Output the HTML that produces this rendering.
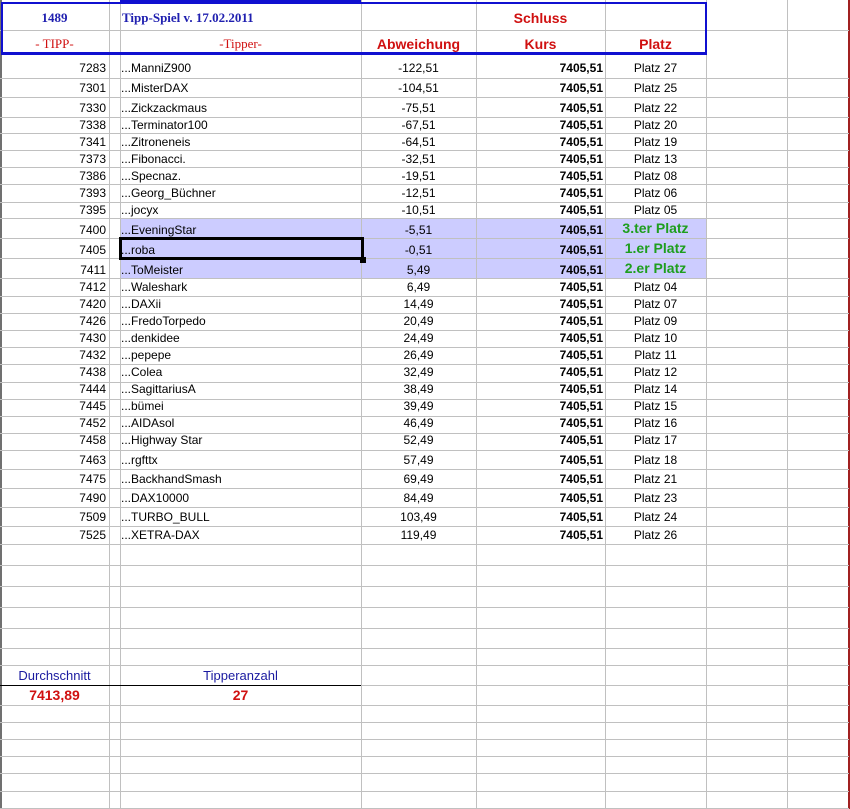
<!DOCTYPE html>
<html><head><meta charset="utf-8"><style>
*{margin:0;padding:0;box-sizing:border-box}
body{width:850px;height:809px;background:#fff;position:relative;overflow:hidden;font-family:"Liberation Sans",Arial,sans-serif;font-size:12px;color:#000}
.h{position:absolute;left:0;width:849px;height:1px;background:#c0c0c0}
.v{position:absolute;top:0;height:809px;width:1px;background:#c0c0c0}
.t{position:absolute;height:14px;line-height:14px;white-space:nowrap}
.n{left:0;width:106px;text-align:right}
.m{left:121px}
.a{left:361px;width:115px;text-align:center}
.k{left:476px;width:127px;text-align:right;font-weight:bold}
.p{left:605px;width:101px;text-align:center}
.g{color:#1e9e1e;font-weight:bold;font-size:14px}
</style></head><body>
<div style="position:absolute;left:120px;top:218px;width:586px;height:60px;background:#ccccff"></div>

<div class="v" style="left:109px"></div><div class="v" style="left:120px"></div>
<div class="v" style="left:361px"></div><div class="v" style="left:476px"></div>
<div class="v" style="left:605px"></div><div class="v" style="left:706px"></div>
<div class="v" style="left:787px"></div>
<div class="v" style="left:0;width:2px;background:#707070"></div>
<div class="v" style="left:848px;width:2px;background:#a02020"></div>

<div class="h" style="top:30px"></div>
<div class="h" style="top:78px"></div><div class="h" style="top:97px"></div><div class="h" style="top:117px"></div>
<div class="h" style="top:133px"></div><div class="h" style="top:150px"></div><div class="h" style="top:167px"></div>
<div class="h" style="top:184px"></div><div class="h" style="top:202px"></div><div class="h" style="top:218px"></div>
<div class="h" style="top:238px"></div><div class="h" style="top:258px"></div><div class="h" style="top:278px"></div>
<div class="h" style="top:296px"></div><div class="h" style="top:313px"></div><div class="h" style="top:330px"></div>
<div class="h" style="top:347px"></div><div class="h" style="top:364px"></div><div class="h" style="top:382px"></div>
<div class="h" style="top:399px"></div><div class="h" style="top:416px"></div><div class="h" style="top:433px"></div>
<div class="h" style="top:450px"></div><div class="h" style="top:469px"></div><div class="h" style="top:488px"></div>
<div class="h" style="top:507px"></div><div class="h" style="top:526px"></div><div class="h" style="top:544px"></div>
<div class="h" style="top:565px"></div><div class="h" style="top:586px"></div><div class="h" style="top:607px"></div>
<div class="h" style="top:628px"></div><div class="h" style="top:648px"></div><div class="h" style="top:665px"></div>
<div class="h" style="top:705px"></div><div class="h" style="top:722px"></div><div class="h" style="top:739px"></div>
<div class="h" style="top:756px"></div><div class="h" style="top:773px"></div><div class="h" style="top:791px"></div>
<div class="h" style="top:808px"></div>
<div class="h" style="top:685px;width:361px;background:#000"></div>
<div class="h" style="top:685px;left:361px;width:488px"></div>

<!-- header box -->
<div style="position:absolute;left:1px;top:2px;width:706px;height:53px;border:2px solid #1010d0;border-bottom-width:3px"></div>
<div style="position:absolute;left:120px;top:0;width:241px;height:3px;background:#1010d0"></div>
<div class="t" style="left:0;width:109px;top:11px;text-align:center;font-family:'Liberation Serif',serif;font-weight:bold;font-size:13px;color:#2020b0">1489</div>
<div class="t" style="left:122px;top:11px;font-family:'Liberation Serif',serif;font-weight:bold;font-size:13px;color:#2020b0">Tipp-Spiel v. 17.02.2011</div>
<div class="t" style="left:0;width:109px;top:37px;text-align:center;font-family:'Liberation Serif',serif;font-size:13px;color:#d01010">- TIPP-</div>
<div class="t" style="left:120px;width:241px;top:37px;text-align:center;font-family:'Liberation Serif',serif;font-size:13px;color:#d01010">-Tipper-</div>
<div class="t" style="left:361px;width:115px;top:37px;text-align:center;font-weight:bold;font-size:14px;color:#d01010">Abweichung</div>
<div class="t" style="left:476px;width:129px;top:11px;text-align:center;font-weight:bold;font-size:14px;color:#d01010">Schluss</div>
<div class="t" style="left:476px;width:129px;top:37px;text-align:center;font-weight:bold;font-size:14px;color:#d01010">Kurs</div>
<div class="t" style="left:605px;width:101px;top:37px;text-align:center;font-weight:bold;font-size:14px;color:#d01010">Platz</div>

<div class="t n" style="top:61px">7283</div><div class="t m" style="top:61px">...ManniZ900</div><div class="t a" style="top:61px">-122,51</div><div class="t k" style="top:61px">7405,51</div><div class="t p" style="top:61px">Platz 27</div>
<div class="t n" style="top:81px">7301</div><div class="t m" style="top:81px">...MisterDAX</div><div class="t a" style="top:81px">-104,51</div><div class="t k" style="top:81px">7405,51</div><div class="t p" style="top:81px">Platz 25</div>
<div class="t n" style="top:101px">7330</div><div class="t m" style="top:101px">...Zickzackmaus</div><div class="t a" style="top:101px">-75,51</div><div class="t k" style="top:101px">7405,51</div><div class="t p" style="top:101px">Platz 22</div>
<div class="t n" style="top:118px">7338</div><div class="t m" style="top:118px">...Terminator100</div><div class="t a" style="top:118px">-67,51</div><div class="t k" style="top:118px">7405,51</div><div class="t p" style="top:118px">Platz 20</div>
<div class="t n" style="top:135px">7341</div><div class="t m" style="top:135px">...Zitroneneis</div><div class="t a" style="top:135px">-64,51</div><div class="t k" style="top:135px">7405,51</div><div class="t p" style="top:135px">Platz 19</div>
<div class="t n" style="top:152px">7373</div><div class="t m" style="top:152px">...Fibonacci.</div><div class="t a" style="top:152px">-32,51</div><div class="t k" style="top:152px">7405,51</div><div class="t p" style="top:152px">Platz 13</div>
<div class="t n" style="top:169px">7386</div><div class="t m" style="top:169px">...Specnaz.</div><div class="t a" style="top:169px">-19,51</div><div class="t k" style="top:169px">7405,51</div><div class="t p" style="top:169px">Platz 08</div>
<div class="t n" style="top:186px">7393</div><div class="t m" style="top:186px">...Georg_Büchner</div><div class="t a" style="top:186px">-12,51</div><div class="t k" style="top:186px">7405,51</div><div class="t p" style="top:186px">Platz 06</div>
<div class="t n" style="top:203px">7395</div><div class="t m" style="top:203px">...jocyx</div><div class="t a" style="top:203px">-10,51</div><div class="t k" style="top:203px">7405,51</div><div class="t p" style="top:203px">Platz 05</div>
<div class="t n" style="top:223px">7400</div><div class="t m" style="top:223px">...EveningStar</div><div class="t a" style="top:223px">-5,51</div><div class="t k" style="top:223px">7405,51</div><div class="t p g" style="top:221px">3.ter Platz</div>
<div class="t n" style="top:243px">7405</div><div class="t m" style="top:243px">...roba</div><div class="t a" style="top:243px">-0,51</div><div class="t k" style="top:243px">7405,51</div><div class="t p g" style="top:241px">1.er Platz</div>
<div class="t n" style="top:263px">7411</div><div class="t m" style="top:263px">...ToMeister</div><div class="t a" style="top:263px">5,49</div><div class="t k" style="top:263px">7405,51</div><div class="t p g" style="top:261px">2.er Platz</div>
<div class="t n" style="top:280px">7412</div><div class="t m" style="top:280px">...Waleshark</div><div class="t a" style="top:280px">6,49</div><div class="t k" style="top:280px">7405,51</div><div class="t p" style="top:280px">Platz 04</div>
<div class="t n" style="top:297px">7420</div><div class="t m" style="top:297px">...DAXii</div><div class="t a" style="top:297px">14,49</div><div class="t k" style="top:297px">7405,51</div><div class="t p" style="top:297px">Platz 07</div>
<div class="t n" style="top:314px">7426</div><div class="t m" style="top:314px">...FredoTorpedo</div><div class="t a" style="top:314px">20,49</div><div class="t k" style="top:314px">7405,51</div><div class="t p" style="top:314px">Platz 09</div>
<div class="t n" style="top:331px">7430</div><div class="t m" style="top:331px">...denkidee</div><div class="t a" style="top:331px">24,49</div><div class="t k" style="top:331px">7405,51</div><div class="t p" style="top:331px">Platz 10</div>
<div class="t n" style="top:348px">7432</div><div class="t m" style="top:348px">...pepepe</div><div class="t a" style="top:348px">26,49</div><div class="t k" style="top:348px">7405,51</div><div class="t p" style="top:348px">Platz 11</div>
<div class="t n" style="top:365px">7438</div><div class="t m" style="top:365px">...Colea</div><div class="t a" style="top:365px">32,49</div><div class="t k" style="top:365px">7405,51</div><div class="t p" style="top:365px">Platz 12</div>
<div class="t n" style="top:382px">7444</div><div class="t m" style="top:382px">...SagittariusA</div><div class="t a" style="top:382px">38,49</div><div class="t k" style="top:382px">7405,51</div><div class="t p" style="top:382px">Platz 14</div>
<div class="t n" style="top:399px">7445</div><div class="t m" style="top:399px">...bümei</div><div class="t a" style="top:399px">39,49</div><div class="t k" style="top:399px">7405,51</div><div class="t p" style="top:399px">Platz 15</div>
<div class="t n" style="top:416px">7452</div><div class="t m" style="top:416px">...AIDAsol</div><div class="t a" style="top:416px">46,49</div><div class="t k" style="top:416px">7405,51</div><div class="t p" style="top:416px">Platz 16</div>
<div class="t n" style="top:433px">7458</div><div class="t m" style="top:433px">...Highway Star</div><div class="t a" style="top:433px">52,49</div><div class="t k" style="top:433px">7405,51</div><div class="t p" style="top:433px">Platz 17</div>
<div class="t n" style="top:453px">7463</div><div class="t m" style="top:453px">...rgfttx</div><div class="t a" style="top:453px">57,49</div><div class="t k" style="top:453px">7405,51</div><div class="t p" style="top:453px">Platz 18</div>
<div class="t n" style="top:472px">7475</div><div class="t m" style="top:472px">...BackhandSmash</div><div class="t a" style="top:472px">69,49</div><div class="t k" style="top:472px">7405,51</div><div class="t p" style="top:472px">Platz 21</div>
<div class="t n" style="top:491px">7490</div><div class="t m" style="top:491px">...DAX10000</div><div class="t a" style="top:491px">84,49</div><div class="t k" style="top:491px">7405,51</div><div class="t p" style="top:491px">Platz 23</div>
<div class="t n" style="top:510px">7509</div><div class="t m" style="top:510px">...TURBO_BULL</div><div class="t a" style="top:510px">103,49</div><div class="t k" style="top:510px">7405,51</div><div class="t p" style="top:510px">Platz 24</div>
<div class="t n" style="top:528px">7525</div><div class="t m" style="top:528px">...XETRA-DAX</div><div class="t a" style="top:528px">119,49</div><div class="t k" style="top:528px">7405,51</div><div class="t p" style="top:528px">Platz 26</div>

<!-- selected cell -->
<div style="position:absolute;left:119px;top:237px;width:245px;height:23px;border:3px solid #000"></div>
<div style="position:absolute;left:360px;top:257px;width:6px;height:6px;background:#000"></div>

<div class="t" style="left:0;width:109px;top:669px;text-align:center;font-size:13px;color:#1a1aa0">Durchschnitt</div>
<div class="t" style="left:120px;width:241px;top:669px;text-align:center;font-size:13px;color:#1a1aa0">Tipperanzahl</div>
<div class="t" style="left:0;width:109px;top:688px;text-align:center;font-weight:bold;font-size:14px;color:#d01010">7413,89</div>
<div class="t" style="left:120px;width:241px;top:688px;text-align:center;font-weight:bold;font-size:14px;color:#d01010">27</div>
</body></html>
